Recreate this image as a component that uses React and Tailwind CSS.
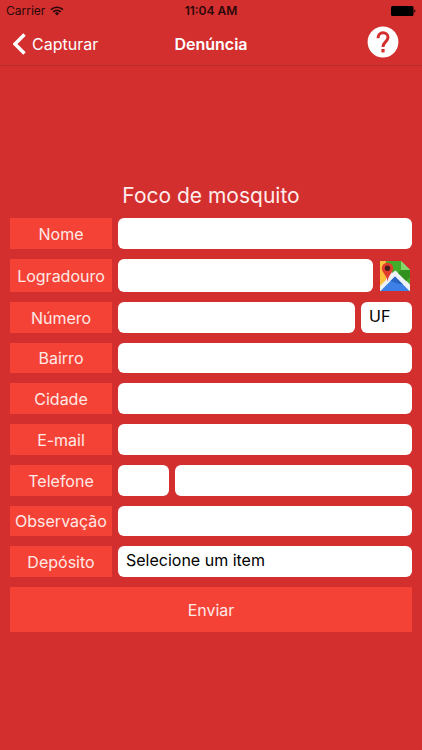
const inputClass =
  "block h-full w-full min-w-0 flex-1 rounded-md bg-white px-2 text-[16px] text-black outline-none";

const selectClass =
  "block h-full appearance-none rounded-md bg-white px-2 pb-1 text-[16px] leading-5 text-black outline-none";

const FormRow = ({ id, label, height = "h-[31px]", children }) => (
  <div className={`flex gap-[6px] ${height}`}>
    <label
      htmlFor={id}
      className="flex w-[102px] shrink-0 items-center justify-center bg-[#f44336] text-[16px] text-[#ffe9e7]"
    >
      {label}
    </label>
    <div className="flex min-w-0 flex-1 gap-[6px]">{children}</div>
  </div>
);

const WifiIcon = () => (
  <svg viewBox="0 0 14 10" className="h-[10px] w-[14px]" aria-hidden="true">
    <g fill="none" stroke="#2a0808" strokeWidth="1.7">
      <path d="M1 3.7 A8.6 8.6 0 0 1 13 3.7" />
      <path d="M3.2 6 A5.4 5.4 0 0 1 10.8 6" />
    </g>
    <path d="M7 9.6 L4.8 7.3 A3.1 3.1 0 0 1 9.2 7.3 Z" fill="#2a0808" />
  </svg>
);

const BatteryIcon = () => (
  <svg viewBox="0 0 25 10" className="h-[10px] w-[25px]" aria-hidden="true">
    <rect width="22.5" height="10" rx="1.6" fill="#000" />
    <path d="M23.3 3.2 A2 2 0 0 1 23.3 6.8 Z" fill="#000" />
  </svg>
);

const BackIcon = () => (
  <svg viewBox="0 0 13 22" className="h-[22px] w-[13px]" aria-hidden="true">
    <path d="M11.5 1.5 L2 11 L11.5 20.5" fill="none" stroke="#fff" strokeWidth="3.4" />
  </svg>
);

const HelpIcon = () => (
  <svg viewBox="0 0 32 32" className="h-8 w-8" aria-hidden="true">
    <circle cx="16" cy="16" r="15.4" fill="#fff" />
    <path
      d="M11 12.2 C11 8.8 13.2 6.8 16 6.8 C18.9 6.8 21 8.8 21 11.6 C21 15.4 16 15.9 16 20.9"
      fill="none"
      stroke="#d32f2f"
      strokeWidth="3"
    />
    <rect x="14.4" y="23" width="3.2" height="3.4" fill="#d32f2f" />
  </svg>
);

const MapIcon = () => (
  <svg viewBox="0 0 30 30" className="h-[30px] w-[30px]" aria-hidden="true">
    <path d="M0 0 H21 L30 9 V30 H0 Z" fill="#eef1f6" />
    <path d="M4 0 H21 L30 9 V23.5 L15.5 9.5 L12 12 Z" fill="#43ad2b" />
    <path d="M21 9 H30 V16 L26 20 L18 12 Z" fill="#31911f" />
    <path d="M21 0 L30 9 H21 Z" fill="#83d66a" />
    <path d="M0 0 H6 V19 L0 25 Z" fill="#fbc13c" />
    <path d="M0.5 30 L15 15.5 L29.5 30 Z" fill="#3c80e8" />
    <path d="M10.5 20 L15 15.5 L23 23.5 L19 23 Z" fill="#2a65c4" />
    <path
      d="M7.5 1.8 C4.2 1.8 1.8 4.2 1.8 7.5 C1.8 11.5 6.6 13.8 7.5 20.5 C8.4 13.8 13.2 11.5 13.2 7.5 C13.2 4.2 10.8 1.8 7.5 1.8 Z"
      fill="#e33b2e"
    />
    <circle cx="7.5" cy="7.2" r="2.7" fill="#46201f" />
  </svg>
);

const App = () => {
  return (
    <div className="flex min-h-screen flex-col bg-[#d32f2f] font-['Inter',sans-serif] text-white">
      <header className="border-b border-[#b92a2a]">
        <div className="grid h-[22px] grid-cols-3 items-center px-[6px] text-[12px] text-[#2a0808]">
          <div className="flex items-center gap-[5px]">
            <span>Carrier</span>
            <WifiIcon />
          </div>
          <span className="text-center font-semibold">11:04 AM</span>
          <div className="flex justify-end">
            <BatteryIcon />
          </div>
        </div>
        <nav className="grid h-[43px] grid-cols-[1fr_auto_1fr] items-center px-[13px]">
          <a href="#capturar" className="flex items-center gap-[6px] text-[16px]">
            <BackIcon />
            Capturar
          </a>
          <h1 className="text-center text-[16px] font-semibold">Denúncia</h1>
          <button type="button" aria-label="Ajuda" className="mr-[10px] mb-[3px] justify-self-end">
            <HelpIcon />
          </button>
        </nav>
      </header>

      <main className="flex flex-1 flex-col justify-center px-[10px] pb-[2px]">
        <h2 className="mb-2 text-center text-[21px] leading-7 text-[#ffecec]">Foco de mosquito</h2>
        <form className="flex flex-col gap-[10px]" onSubmit={(e) => e.preventDefault()}>
          <FormRow id="nome" label="Nome">
            <input id="nome" type="text" className={inputClass} />
          </FormRow>
          <FormRow id="logradouro" label="Logradouro" height="h-[33px]">
            <input id="logradouro" type="text" className={inputClass} />
            <button type="button" aria-label="Abrir mapa" className="mr-[2px] ml-px shrink-0">
              <MapIcon />
            </button>
          </FormRow>
          <FormRow id="numero" label="Número">
            <input id="numero" type="text" className={inputClass} />
            <select aria-label="UF" className={`${selectClass} w-[51px] shrink-0`}>
              <option>UF</option>
            </select>
          </FormRow>
          <FormRow id="bairro" label="Bairro" height="h-[30px]">
            <input id="bairro" type="text" className={inputClass} />
          </FormRow>
          <FormRow id="cidade" label="Cidade">
            <input id="cidade" type="text" className={inputClass} />
          </FormRow>
          <FormRow id="email" label="E-mail">
            <input id="email" type="email" className={inputClass} />
          </FormRow>
          <FormRow id="telefone" label="Telefone">
            <div className="w-[51px] shrink-0">
              <input type="tel" aria-label="DDD" className={inputClass} />
            </div>
            <input id="telefone" type="tel" className={inputClass} />
          </FormRow>
          <FormRow id="observacao" label="Observação" height="h-[30px]">
            <input id="observacao" type="text" className={inputClass} />
          </FormRow>
          <FormRow id="deposito" label="Depósito">
            <select id="deposito" className={`${selectClass} w-full`}>
              <option>Selecione um item</option>
            </select>
          </FormRow>
          <button type="submit" className="h-[45px] bg-[#f44336] text-[16px] text-[#ffe9e7]">
            Enviar
          </button>
        </form>
      </main>
    </div>
  );
};

export default App;
